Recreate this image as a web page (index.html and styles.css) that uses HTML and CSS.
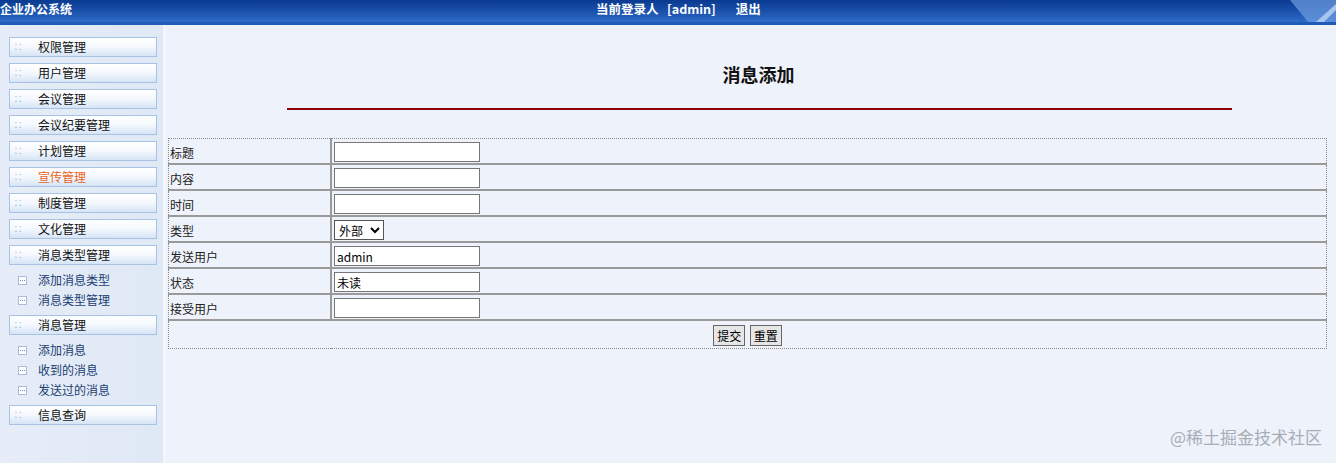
FILE: index.html
```html
<!DOCTYPE html>
<html lang="zh-CN">
<head>
    <meta charset="UTF-8">
    <title>企业办公系统</title>
    <link rel="stylesheet" href="styles.css">
</head>
<body>
    <div class="top">
        <span class="logo">企业办公系统</span>
        <span class="login">当前登录人&nbsp;&nbsp;&nbsp;[admin]&nbsp;&nbsp;&nbsp;&nbsp;&nbsp;&nbsp;&nbsp;退出</span>
        <svg class="deco" width="50" height="22" viewBox="0 0 50 22">
            <polygon points="4,0 50,0 50,22 22,22" fill="#6f9ee0" opacity="0.7"/>
            <polygon points="30,22 50,4 50,10 38,22" fill="#b9d3f5" opacity="0.8"/>
        </svg>
    </div>
    <div class="band"></div>
    <div class="wrap">
        <div class="menu">
            <div class="item"><i class="dot"></i>权限管理</div>
            <div class="item"><i class="dot"></i>用户管理</div>
            <div class="item"><i class="dot"></i>会议管理</div>
            <div class="item"><i class="dot"></i>会议纪要管理</div>
            <div class="item"><i class="dot"></i>计划管理</div>
            <div class="item active"><i class="dot"></i>宣传管理</div>
            <div class="item"><i class="dot"></i>制度管理</div>
            <div class="item"><i class="dot"></i>文化管理</div>
            <div class="item"><i class="dot"></i>消息类型管理</div>
            <ul class="sub">
                <li><i class="box"></i>添加消息类型</li>
                <li><i class="box"></i>消息类型管理</li>
            </ul>
            <div class="item"><i class="dot"></i>消息管理</div>
            <ul class="sub">
                <li><i class="box"></i>添加消息</li>
                <li><i class="box"></i>收到的消息</li>
                <li><i class="box"></i>发送过的消息</li>
            </ul>
            <div class="item"><i class="dot"></i>信息查询</div>
        </div>
        <div class="content">
            <h1>消息添加</h1>
            <div class="line"></div>
            <form>
                <table class="form">
                    <tr><td class="lab">标题</td><td><input type="text"></td></tr>
                    <tr><td class="lab">内容</td><td><input type="text"></td></tr>
                    <tr><td class="lab">时间</td><td><input type="text"></td></tr>
                    <tr><td class="lab">类型</td><td><select><option>外部</option></select></td></tr>
                    <tr><td class="lab">发送用户</td><td><input type="text" value="admin"></td></tr>
                    <tr><td class="lab">状态</td><td><input type="text" value="未读"></td></tr>
                    <tr><td class="lab">接受用户</td><td><input type="text"></td></tr>
                    <tr><td colspan="2" class="btns"><button type="button">提交</button> <button type="reset">重置</button></td></tr>
                </table>
            </form>
        </div>
    </div>
    <div class="mark">@稀土掘金技术社区</div>
</body>
</html>
```
FILE: styles.css
```css
html, body {
    margin: 0;
    height: 100%;
}
body {
    font-family: "Noto Sans CJK SC", "DejaVu Sans", sans-serif;
    font-size: 12px;
    background-color: #eef2fb;
    overflow: hidden;
}
.top {
    height: 22px;
    display: flex;
    align-items: center;
    background: linear-gradient(#0a3a90, #1d55b0 60%, #2f6cc6);
    color: #fff;
    font-weight: bold;
}
.logo {
    width: 596px;
    margin-top: -6px;
}
.login {
    margin-top: -6px;
    font-size: 12.5px;
}
.deco {
    margin-left: auto;
}
.band {
    height: 3px;
    background-color: #1f5cb8;
}
.wrap {
    display: flex;
    height: 438px;
}
.menu {
    width: 163px;
    padding-top: 12px;
    background: linear-gradient(90deg, #e6edf8, #dfe8f5);
    border-right: 3px solid #f3f6fc;
}
.item {
    margin: 0 0 6px 9px;
    width: 146px;
    height: 18px;
    line-height: 18px;
    border: 1px solid #a8c2e4;
    background: linear-gradient(#ffffff, #f4f8fd 50%, #d5e4f6);
    color: #111;
    display: flex;
    align-items: center;
    overflow: hidden;
}
.item.active {
    color: #e8641b;
}
.dot {
    width: 24px;
    height: 18px;
    line-height: 18px;
    margin-left: 4px;
    font-style: normal;
    font-size: 8px;
    color: #8fb0da;
}
.dot::before {
    content: "∷";
}
.sub {
    list-style: none;
    margin: -1px 0 5px 0;
    padding: 0;
}
.sub li {
    height: 20px;
    line-height: 20px;
    padding-left: 18px;
    color: #1c3f72;
    display: flex;
    align-items: center;
}
.box {
    width: 7px;
    height: 7px;
    border: 1px solid #a9bddb;
    background:
        repeating-linear-gradient(90deg, #6f8fbf 0 1px, transparent 1px 2px) 1px 3px / 5px 1px no-repeat,
        #fff;
    margin-right: 11px;
}
.content {
    flex: 1;
    padding: 0 9px 0 2px;
}
h1 {
    margin: 36px 0 0 0;
    text-align: center;
    font-size: 18px;
    line-height: 26px;
    padding-left: 22px;
    color: #111;
}
.line {
    width: 945px;
    height: 2px;
    background-color: #8b0000;
    margin: 21px 0 0 119px;
}
.form {
    margin-top: 28px;
    width: 100%;
    border: 1px dotted #8a8a8a;
    border-collapse: collapse;
}
.form td {
    height: 22px;
    padding: 2px 0 0 2px;
    border-bottom: 2px solid #9a9a9a;
}
.form .lab {
    width: 160px;
    border-right: 2px solid #9a9a9a;
    color: #222;
    padding-left: 1px;
}
.form .btns {
    text-align: center;
    border-bottom: none;
    height: 25px;
    padding: 2px 0 0 0;
}
input {
    width: 140px;
    height: 16px;
    border: 1px solid #777;
    padding: 1px 2px;
    font: 12px "Noto Sans CJK SC", sans-serif;
    background: #fff;
}
select {
    height: 20px;
    width: 50px;
    font: 12px "Noto Sans CJK SC", sans-serif;
    border: 1px solid #555;
    background: #fff;
}
button {
    height: 21px;
    padding: 0 3px;
    margin: 0 1px;
    font: 12px "Noto Sans CJK SC", sans-serif;
    border: 1px solid #666;
    background: #e6e6e6;
}
.mark {
    position: absolute;
    right: 14px;
    bottom: 14px;
    font-size: 17px;
    color: #a9adb6;
}
```
